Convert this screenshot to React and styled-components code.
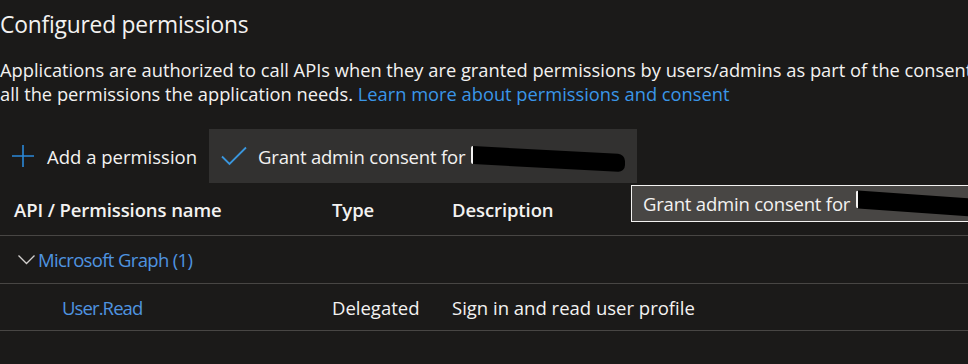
import React from "react";
import styled, { createGlobalStyle } from "styled-components";

const Global = createGlobalStyle`
  html, body { margin: 0; padding: 0; background: #1b1a19; overflow: hidden; }
  body { width: 968px; height: 364px; }
  #root { width: 968px; height: 364px; overflow: hidden; }
`;

const Page = styled.div`
  position: relative;
  width: 968px;
  height: 364px;
  background: #1b1a19;
  color: #f3f2f1;
  font-family: "Open Sans", "Noto Sans", sans-serif;
  overflow: hidden;
`;

const Title = styled.h2`
  margin: 0;
  padding-top: 9px;
  font-size: 22.8px;
  font-weight: 400;
  line-height: 32px;
  letter-spacing: -0.2px;
  white-space: nowrap;
`;

const Intro = styled.p`
  margin: 17px 0 0 0;
  font-size: 18.3px;
  line-height: 24px;
  white-space: nowrap;
`;

const Line = styled.span`
  display: block;
`;

const Link = styled.a`
  color: #3a96e8;
  text-decoration: none;
`;

const Toolbar = styled.div`
  display: flex;
  align-items: stretch;
  height: 54px;
  margin-top: 23px;
`;

const ToolButton = styled.div`
  display: flex;
  align-items: center;
  gap: ${(p) => (p.$hover ? 11 : 13)}px;
  padding: 0 12px;
  background: ${(p) => (p.$hover ? "#323130" : "transparent")};
  font-size: 18.5px;
  white-space: nowrap;
  letter-spacing: ${(p) => (p.$hover ? -0.2 : 0)}px;
`;

const Redact = styled.span`
  display: inline-block;
  width: ${(p) => p.$w}px;
  height: 18px;
  background: #000;
  border-left: 2px solid #f3f2f1;
  border-radius: 2px 7px 7px 2px;
  transform: skewY(${(p) => p.$skew || 0}deg);
  vertical-align: middle;
  margin-left: ${(p) => p.$ml || 4}px;
`;

const Table = styled.div`
  display: flex;
  flex-direction: column;
`;

const Row = styled.div`
  display: grid;
  grid-template-columns: 318px 120px 1fr;
  align-items: center;
  box-sizing: border-box;
  height: ${(p) => p.$h}px;
  border-bottom: 1px solid #484644;
  padding-left: 14px;
  font-size: 18.5px;
  white-space: nowrap;
`;

const HeadCell = styled.div`
  font-weight: 600;
  letter-spacing: -0.1px;
`;

const Cell = styled.div`
  color: ${(p) => (p.$link ? "#4f94e0" : "#f3f2f1")};
  padding-left: ${(p) => p.$indent || 0}px;
  letter-spacing: ${(p) => (p.$link ? -0.9 : 0)}px;
`;

const GroupRow = styled.div`
  display: flex;
  align-items: center;
  box-sizing: border-box;
  height: 48px;
  border-bottom: 1px solid #484644;
  padding-left: 18px;
  gap: 3px;
  font-size: 18.5px;
  letter-spacing: -0.65px;
  color: #4f94e0;
  white-space: nowrap;
`;

const Tooltip = styled.div`
  position: absolute;
  left: 631px;
  top: 185px;
  width: 360px;
  height: 37px;
  box-sizing: border-box;
  border: 1px solid #f3f2f1;
  background: #484644;
  color: #f3f2f1;
  display: flex;
  align-items: center;
  padding-left: 11px;
  font-size: 18.5px;
  letter-spacing: -0.2px;
  white-space: nowrap;
`;

const PlusIcon = () => (
  <svg width="22" height="22" viewBox="0 0 22 22">
    <path d="M11 0v22M0 11h22" stroke="#2b88d8" strokeWidth="1.6" fill="none" />
  </svg>
);

const CheckIcon = () => (
  <svg width="26" height="20" viewBox="0 0 26 20">
    <path d="M1 10.5l7.5 7.5L25 1.5" stroke="#3a96dd" strokeWidth="1.8" fill="none" />
  </svg>
);

const Chevron = () => (
  <svg width="17" height="10" viewBox="0 0 17 10">
    <path d="M0.5 0.5l8 8 8-8" stroke="#d2d0ce" strokeWidth="1.3" fill="none" />
  </svg>
);

export default function App() {
  return (
    <>
      <Global />
      <Page>
        <Title>Configured permissions</Title>
        <Intro>
          <Line>
            Applications are authorized to call APIs when they are granted permissions by users/admins as part of the consent process. The list of configured permissions should include
          </Line>
          <Line>
            all the permissions the application needs. <Link>Learn more about permissions and consent</Link>
          </Line>
        </Intro>
        <Toolbar>
          <ToolButton>
            <PlusIcon />
            <span>Add a permission</span>
          </ToolButton>
          <ToolButton $hover>
            <CheckIcon />
            <span>
              Grant admin consent for<Redact $w={152} $skew={3} $ml={6} />
            </span>
          </ToolButton>
        </Toolbar>
        <Table>
          <Row $h={53}>
            <HeadCell>API / Permissions name</HeadCell>
            <HeadCell>Type</HeadCell>
            <HeadCell>Description</HeadCell>
          </Row>
          <GroupRow>
            <Chevron />
            <span>Microsoft Graph (1)</span>
          </GroupRow>
          <Row $h={47}>
            <Cell $link $indent={48}>User.Read</Cell>
            <Cell>Delegated</Cell>
            <Cell>Sign in and read user profile</Cell>
          </Row>
        </Table>
        <Tooltip>
          Grant admin consent for<Redact $w={140} $skew={4} $ml={6} />
        </Tooltip>
      </Page>
    </>
  );
}
